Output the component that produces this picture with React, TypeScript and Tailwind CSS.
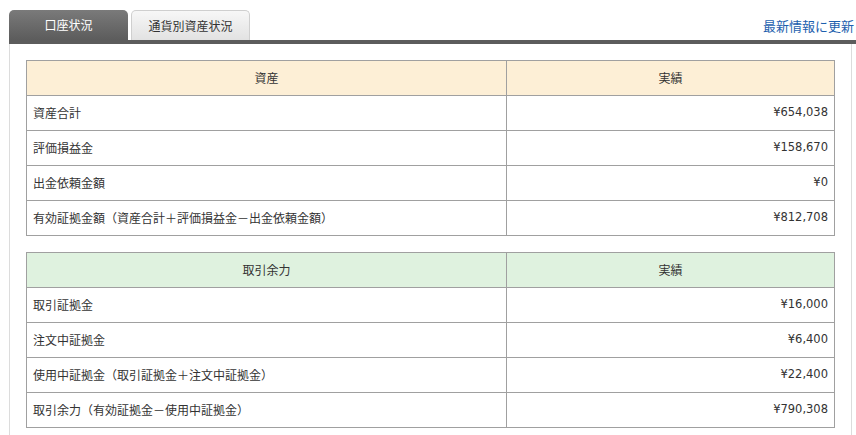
const assets = [
  { label: "資産合計", value: "¥654,038" },
  { label: "評価損益金", value: "¥158,670" },
  { label: "出金依頼金額", value: "¥0" },
  { label: "有効証拠金額（資産合計＋評価損益金－出金依頼金額）", value: "¥812,708" },
]

const margins = [
  { label: "取引証拠金", value: "¥16,000" },
  { label: "注文中証拠金", value: "¥6,400" },
  { label: "使用中証拠金（取引証拠金＋注文中証拠金）", value: "¥22,400" },
  { label: "取引余力（有効証拠金－使用中証拠金）", value: "¥790,308" },
]

type Row = { label: string; value: string }

const SummaryTable = ({ title, rows, headBg }: { title: string; rows: Row[]; headBg: string }) => {
  return (
    <table className="w-full border-collapse text-[12px] text-[#333]">
      <thead>
        <tr className={headBg}>
          <th className="h-[35px] w-[480px] border border-[#a0a0a0] font-normal text-center">{title}</th>
          <th className="h-[35px] border border-[#a0a0a0] font-normal text-center">実績</th>
        </tr>
      </thead>
      <tbody>
        {rows.map((row) => (
          <tr key={row.label} className="bg-white">
            <td className="h-[35px] border border-[#a0a0a0] px-[6px] text-left">{row.label}</td>
            <td
              className="h-[35px] border border-[#a0a0a0] px-[6px] text-right text-[11.5px]"
              style={{ fontFamily: '"DejaVu Sans", "Noto Sans CJK JP", sans-serif' }}
            >
              {row.value}
            </td>
          </tr>
        ))}
      </tbody>
    </table>
  )
}

export default function App() {
  return (
    <div
      className="w-[856px] h-[435px] overflow-hidden bg-white pl-[9px]"
      style={{ fontFamily: '"Noto Sans CJK JP", "Noto Sans", sans-serif' }}
    >
      {/* tabs */}
      <div className="flex items-end justify-between pt-[10px]">
        <div className="flex items-end gap-[3px]">
          <div className="flex h-[30px] w-[119px] items-center justify-center rounded-t-[5px] bg-gradient-to-b from-[#7a7a7a] to-[#5c5c5c] text-[12px] text-white">
            口座状況
          </div>
          <div className="flex h-[30px] w-[119px] items-center justify-center rounded-t-[5px] border border-b-0 border-[#cfcfcf] bg-gradient-to-b from-[#f7f7f7] to-[#e2e2e2] text-[12px] text-[#333]">
            通貨別資産状況
          </div>
        </div>
        <a href="#" className="mb-[5px] mr-[2px] whitespace-nowrap text-[13px] text-[#1d5fae]">
          最新情報に更新
        </a>
      </div>
      <div className="h-[4px] bg-[#5c5c5c]" />

      {/* panel */}
      <div className="mr-[4px] h-[400px] border-x border-[#dcdcdc] px-4 pt-4">
        <SummaryTable title="資産" rows={assets} headBg="bg-[#fdefd6]" />
        <div className="mt-4">
          <SummaryTable title="取引余力" rows={margins} headBg="bg-[#dff2df]" />
        </div>
      </div>
    </div>
  )
}
